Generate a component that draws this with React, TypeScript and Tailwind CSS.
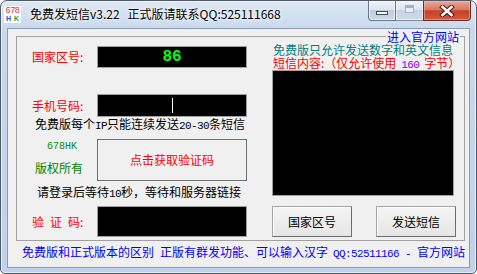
import React from "react";

// half-width ascii like the bitmap SimSun digits
const Ascii = ({ children }: { children: React.ReactNode }) => (
  <span className="font-['Liberation_Mono',monospace] text-[11px] tracking-[-0.6px]">
    {children}
  </span>
);

const BlackBox = ({ className, children }: { className: string; children?: React.ReactNode }) => (
  <div className={`flex items-center justify-center border border-[#a0a0a0] bg-black ${className}`}>
    {children}
  </div>
);

const WinButton = ({ label }: { label: string }) => (
  <div className="flex h-full w-[80px] items-center justify-center border border-[#a3a3a3] border-b-[#6b6b6b] border-r-[#6b6b6b] bg-[linear-gradient(#f4f4f4,#e6e6e6)] text-black shadow-[inset_1px_1px_0_#fff]">
    {label}
  </div>
);

const TitleBar = () => (
  <div className="flex h-[27px] items-start">
    <div className="ml-[3px] mt-[5px] flex h-[17px] w-[17px] flex-col items-center bg-white">
      <span className="font-['Liberation_Sans',sans-serif] text-[9px] leading-[9px] tracking-[-0.3px] text-[#e0302a]">
        678
      </span>
      <span className="flex w-full justify-between px-[2px] font-['Liberation_Sans',sans-serif] text-[7px] font-bold leading-[8px]">
        <span className="text-[#1d4fd6]">H</span>
        <span className="text-[#1f9a2e]">K</span>
      </span>
    </div>
    <div className="ml-[9px] mt-[6px] whitespace-nowrap text-[12px] leading-[14px] text-black [text-shadow:0_0_6px_#fff,0_0_3px_#fff]">
      免费发短信v3.22<span className="ml-[8px]">正式版请联系QQ:525111668</span>
    </div>
    <div className="ml-auto mr-[5px] flex h-[20px]">
      <div className="flex w-[28px] justify-center rounded-bl-[4px] border border-t-0 border-[#6a7789] bg-[linear-gradient(180deg,#eef3f9_0%,#dce6f2_45%,#bfcee0_50%,#cbd8e8_100%)] pt-[10px] shadow-[inset_0_0_0_1px_rgba(255,255,255,0.55)]">
        <div className="h-[4px] w-[12px] border border-[#3f4a5a] bg-white" />
      </div>
      <div className="flex w-[27px] justify-center border-b border-[#7f8c9d] bg-[linear-gradient(180deg,#eef3f9_0%,#dce6f2_45%,#c6d3e3_50%,#d0dcea_100%)] pt-[4px] shadow-[inset_0_0_0_1px_rgba(255,255,255,0.55)]">
        <div className="h-[8px] w-[9px] border border-[#a7b3c2] border-t-[3px] bg-[#e9eef5]" />
      </div>
      <div className="flex w-[48px] justify-center rounded-br-[4px] border border-t-0 border-[#6b2b22] bg-[linear-gradient(180deg,#eaa898_0%,#d8785f_45%,#c4412a_52%,#d45a3f_100%)] pt-[4px] shadow-[inset_0_0_0_1px_rgba(255,200,190,0.45)]">
        <svg width="16" height="12" viewBox="0 0 16 12">
          <path d="M3.5 2 L12.5 10 M12.5 2 L3.5 10" stroke="#4a1a12" strokeWidth="4.6" strokeLinecap="square" />
          <path d="M3.5 2 L12.5 10 M12.5 2 L3.5 10" stroke="#ffffff" strokeWidth="2.6" strokeLinecap="square" />
        </svg>
      </div>
    </div>
  </div>
);

export default function App() {
  return (
    <div className="h-[274px] w-[477px] bg-white font-['Noto_Sans_CJK_SC','Liberation_Sans',sans-serif] text-[12px] leading-[14px]">
      <div className="flex h-full flex-col rounded-b-[5px] rounded-t-[7px] border border-[#4e5a6a] bg-[linear-gradient(180deg,#dde7f3_0%,#c9d9ec_28px,#bfd2ea_100%)] shadow-[inset_0_0_0_1px_rgba(255,255,255,0.6)]">
        <TitleBar />

        <div className="mx-[6px] flex h-[240px] flex-col border border-[#8a9db8] bg-[#f0f0f0]">
          <fieldset className="ml-[8px] mr-[4px] h-[212px] border border-[#a0a0a0]">
            <legend className="ml-auto mr-[4px] px-[1px] text-[12px] leading-[14px] text-[#0000ff]">
              <span className="relative top-[1px]">进入官方网站</span>
            </legend>
            <div className="flex">
              {/* left column */}
              <div className="flex w-[255px] flex-col">
                <div className="mt-[3px] flex h-[22px] items-center">
                  <span className="w-[80px] pl-[15px] text-[#ff0000]">国家区号:</span>
                  <BlackBox className="h-full w-[150px]">
                    <span className="font-['Liberation_Mono',monospace] text-[16px] font-bold leading-[16px] text-[#00ff00]">
                      86
                    </span>
                  </BlackBox>
                </div>
                <div className="mt-[26px] flex h-[23px] items-center">
                  <span className="w-[80px] pl-[15px] text-[#ff0000]">手机号码:</span>
                  <BlackBox className="h-full w-[150px]">
                    <div className="h-[15px] w-[1px] bg-white" />
                  </BlackBox>
                </div>
                <div className="h-[14px] whitespace-nowrap pl-[18px] text-black">
                  免费版每个<Ascii>IP</Ascii>只能连续发送<Ascii>20-30</Ascii>条短信
                </div>
                <div className="mt-[8px] flex h-[42px]">
                  <div className="flex w-[80px] flex-col">
                    <span className="mt-[3px] pl-[30px] font-['Liberation_Mono',monospace] text-[10px] leading-[10px] text-[#0a8a0a]">
                      678HK
                    </span>
                    <span className="mt-[9px] pl-[18px] text-[#008000]">版权所有</span>
                  </div>
                  <div className="flex h-full w-[150px] items-center justify-center border border-[#707070] bg-[#f0f0f0] text-[#ff0000]">
                    点击获取验证码
                  </div>
                </div>
                <div className="mt-[4px] h-[14px] whitespace-nowrap pl-[20px] text-black">
                  请登录后等待<Ascii>10</Ascii>秒，等待和服务器链接
                </div>
                <div className="mt-[7px] flex h-[31px] items-center">
                  <span className="flex w-[80px] pl-[15px] text-[#ff0000]">
                    <span>验</span>
                    <span className="ml-[6px]">证</span>
                    <span className="ml-[6px]">码:</span>
                  </span>
                  <BlackBox className="h-full w-[150px]" />
                </div>
              </div>

              {/* right column */}
              <div className="flex w-[184px] flex-col">
                <div className="h-[13px] whitespace-nowrap pl-[1px] leading-[13px] text-[#008080]">
                  免费版只允许发送数字和英文信息
                </div>
                <div className="h-[14px] whitespace-nowrap pl-[1px] text-[#ff0000]">
                  短信内容:（仅允许使用
                  <span className="mx-[5px] text-[#8000ff]">
                    <Ascii>160</Ascii>
                  </span>
                  字节）
                </div>
                <div className="h-[126px] w-[182px] border border-[#a0a0a0] bg-black" />
                <div className="mt-[10px] flex h-[31px] justify-between">
                  <WinButton label="国家区号" />
                  <WinButton label="发送短信" />
                </div>
              </div>
            </div>
          </fieldset>

          <div className="mt-[4px] whitespace-nowrap pl-[14px] text-[#0000ff]">
            免费版和正式版本的区别
            <span className="ml-[6px]">正版有群发功能、可以输入汉字</span>
            <span className="ml-[5px]">
              <Ascii>QQ:52511166 - </Ascii>
            </span>
            官方网站
          </div>
        </div>
      </div>
    </div>
  );
}
